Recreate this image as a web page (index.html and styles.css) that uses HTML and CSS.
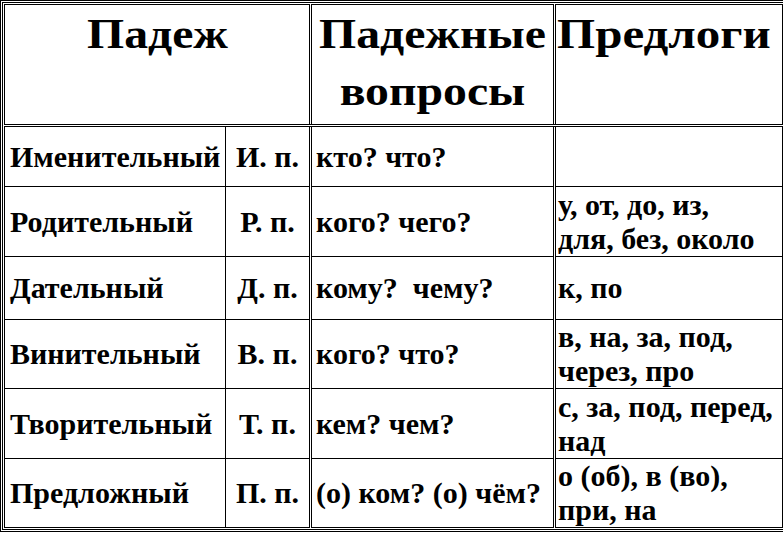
FILE: index.html
```html
<!DOCTYPE html>
<html lang="ru">
<head>
<meta charset="utf-8">
<title>Падежи</title>
<link rel="stylesheet" href="styles.css">
</head>
<body>
<div class="frame">
<table class="cases">
<colgroup>
<col class="c-name"><col class="c-abbr"><col class="c-q"><col class="c-prep">
</colgroup>
<thead>
<tr class="head">
<th colspan="2" class="h-case"><span class="ht">Падеж</span></th>
<th class="h-q"><span class="ht">Падежные вопросы</span></th>
<th class="h-prep"><span class="ht">Предлоги</span></th>
</tr>
</thead>
<tbody>
<tr class="r1"><td class="name">Именительный</td><td class="abbr">И. п.</td><td class="q">кто? что?</td><td class="prep"></td></tr>
<tr class="r2"><td class="name">Родительный</td><td class="abbr">Р. п.</td><td class="q">кого? чего?</td><td class="prep">у, от, до, из,<br>для, без, около</td></tr>
<tr class="r3"><td class="name">Дательный</td><td class="abbr">Д. п.</td><td class="q">кому?&nbsp; чему?</td><td class="prep">к, по</td></tr>
<tr class="r4"><td class="name">Винительный</td><td class="abbr">В. п.</td><td class="q">кого? что?</td><td class="prep">в, на, за, под,<br>через, про</td></tr>
<tr class="r5"><td class="name">Творительный</td><td class="abbr">Т. п.</td><td class="q">кем? чем?</td><td class="prep">с, за, под, перед,<br>над</td></tr>
<tr class="r6"><td class="name">Предложный</td><td class="abbr">П. п.</td><td class="q">(о) ком? (о) чём?</td><td class="prep">о (об), в (во),<br>при, на</td></tr>
</tbody>
</table>
</div>
</body>
</html>
```

FILE: styles.css
```css
html, body {
  margin: 0;
  padding: 0;
  background: #fff;
  overflow: hidden;
}

body {
  width: 783px;
  height: 533px;
  font-family: "Liberation Serif", "Times New Roman", serif;
  font-weight: bold;
  color: #000;
}

.frame {
  display: inline-block;
  border: 3px double #000;
  padding: 1px;
}

.cases {
  border-collapse: collapse;
  table-layout: fixed;
  width: 778px;
  border: 1px solid #000;
}

.c-name { width: 221px; }
.c-abbr { width: 85px; }
.c-q { width: 244px; }
.c-prep { width: 228px; }

.cases th,
.cases td {
  border: 1px solid #000;
  padding: 0 3px;
  box-sizing: border-box;
}

.cases th {
  font-size: 43px;
  line-height: 57px;
  vertical-align: top;
  text-align: center;
  padding-top: 0;
}

.ht {
  display: inline-block;
  transform: scaleX(1.11);
  transform-origin: center top;
}

.cases .h-prep {
  text-align: left;
  padding-left: 1px;
}

.h-prep .ht { transform-origin: left top; transform: scaleX(1.14); }

.head th { height: 121px; border-bottom: 3px double #000; }

.cases td {
  font-size: 30px;
  line-height: 34px;
  vertical-align: middle;
  white-space: nowrap;
}

.cases .q,
.cases .h-q { border-left: 3px double #000; }
.cases .prep,
.cases .h-prep { border-left: 3px double #000; }

.cases .name { padding-left: 5px; text-align: left; }
.cases .abbr { text-align: center; }
.cases .q { padding-left: 4px; }
.cases .prep { padding-left: 2px; }

.r1 td { height: 61px; }
.r2 td { height: 70px; }
.r3 td { height: 63px; }
.r4 td { height: 69px; }
.r5 td { height: 70px; }
.r6 td { height: 63px; }
```
